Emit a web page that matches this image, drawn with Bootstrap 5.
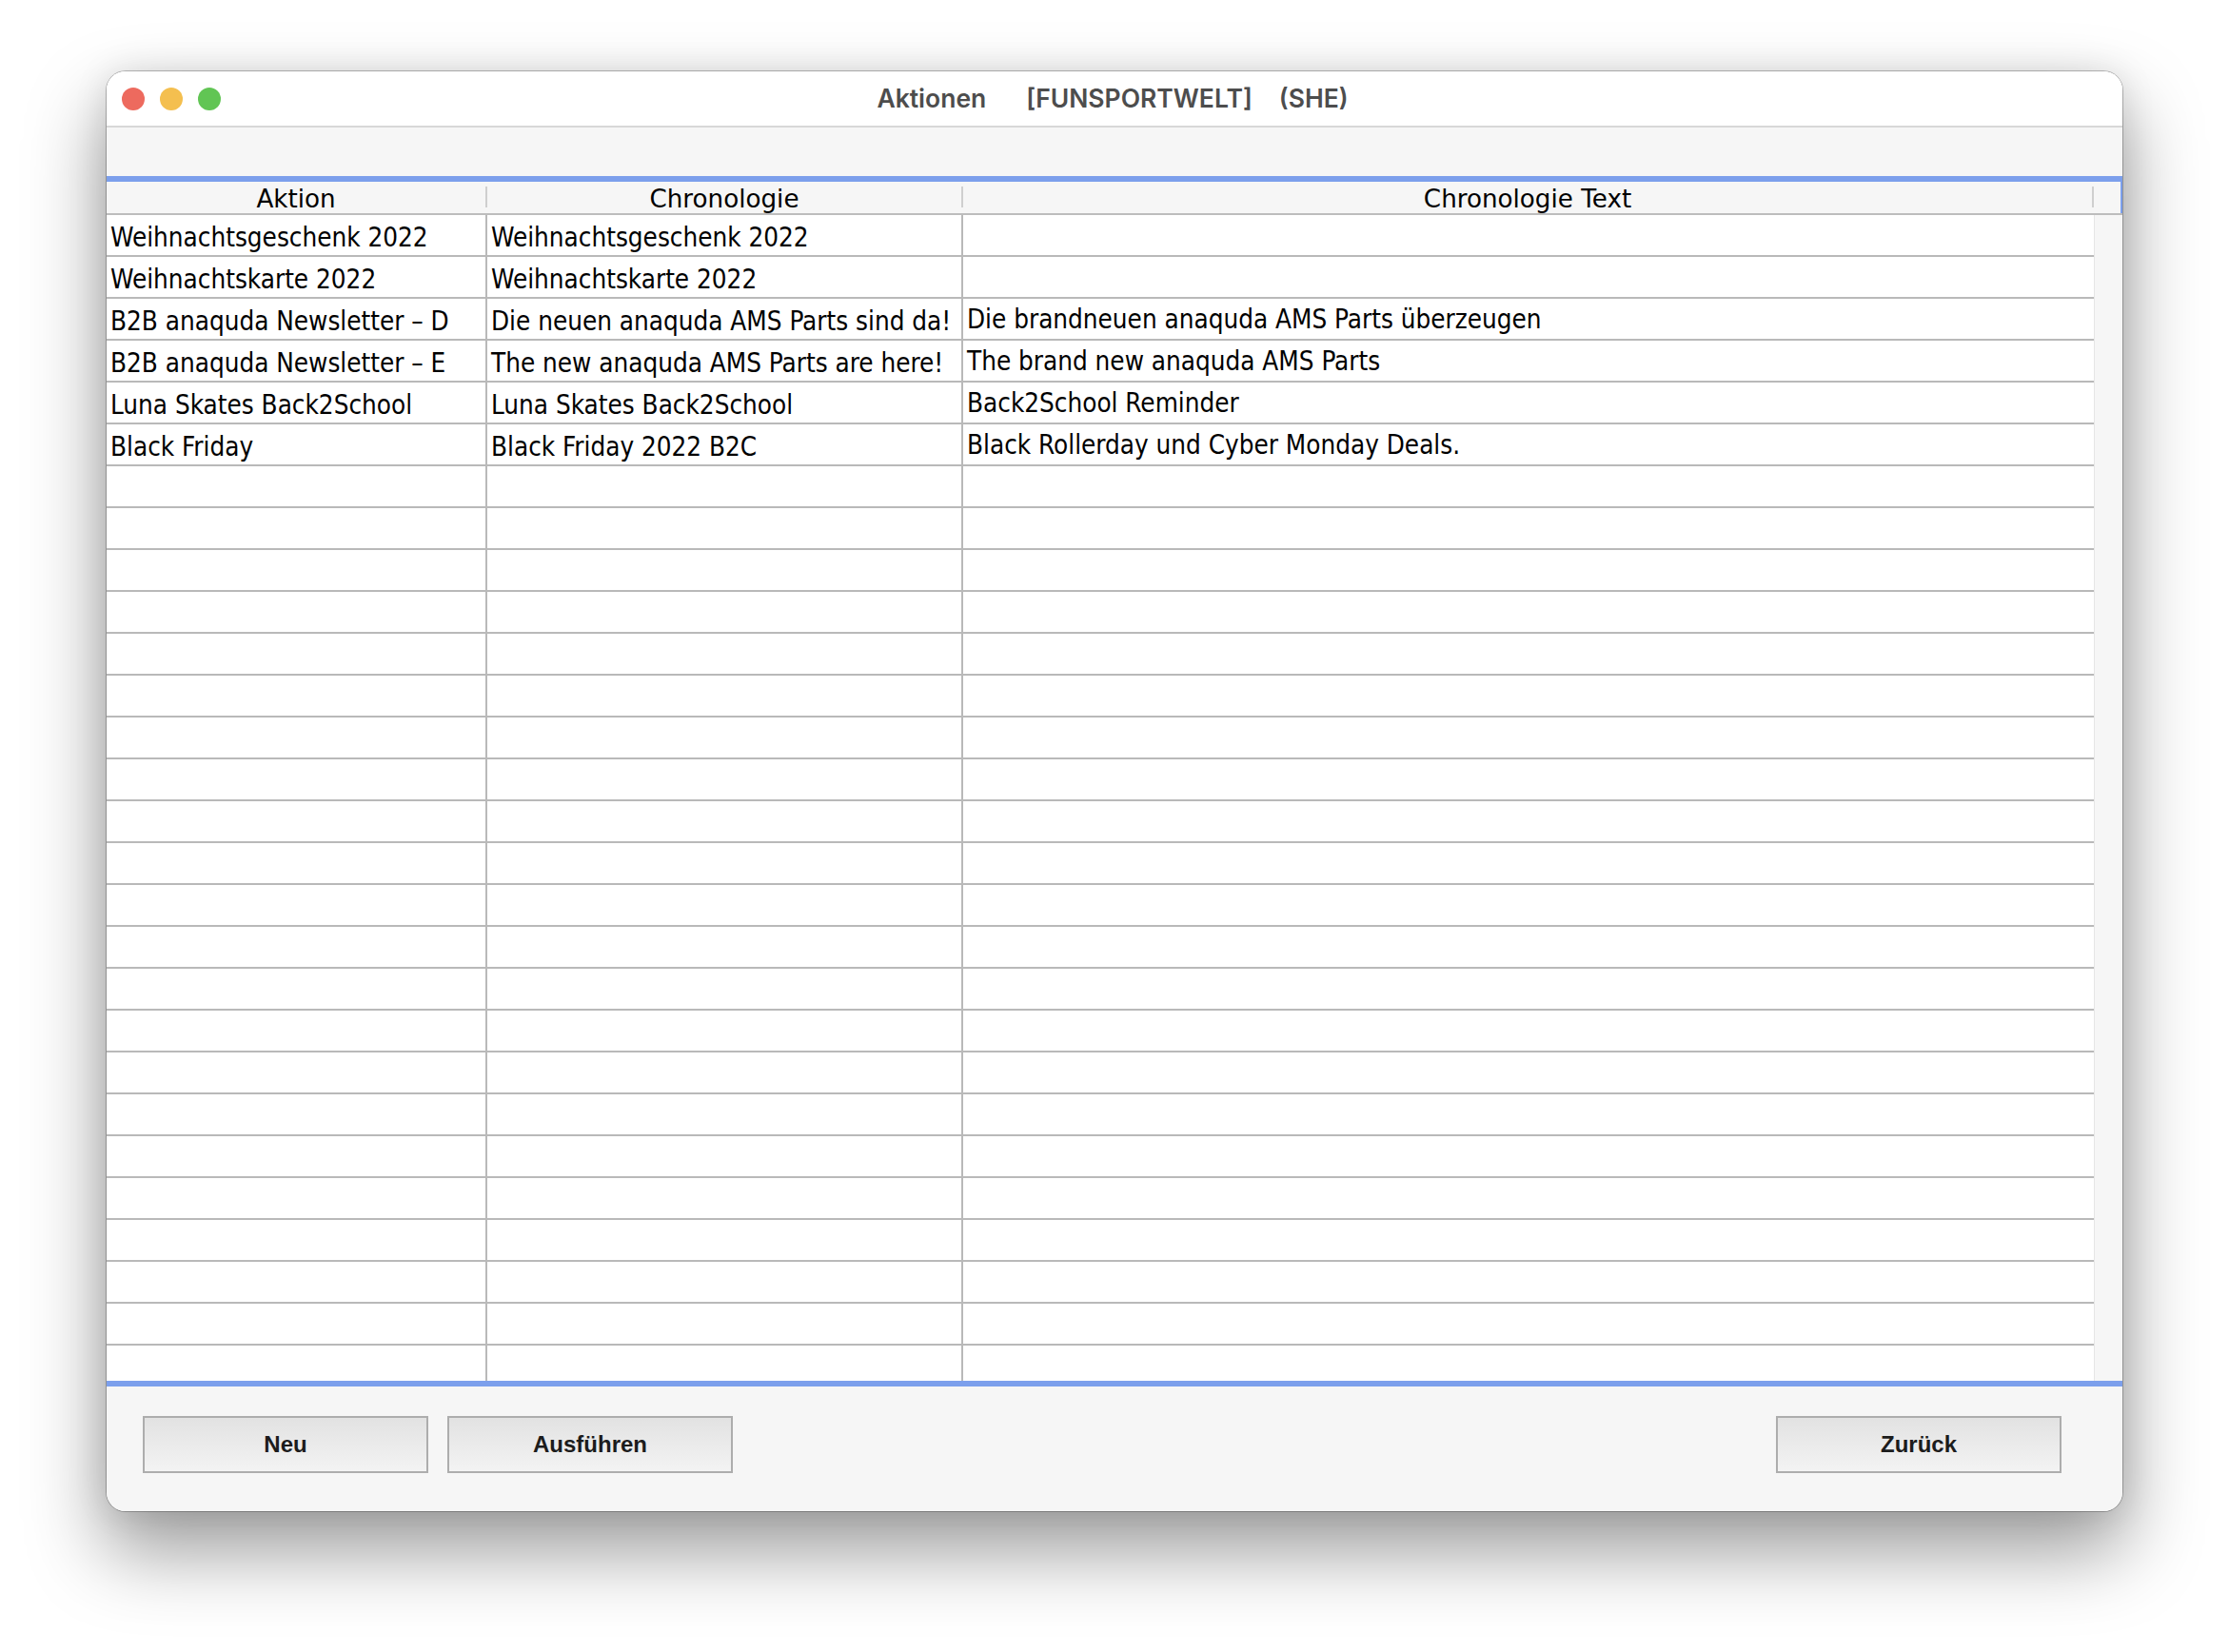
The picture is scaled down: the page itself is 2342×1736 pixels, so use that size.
<!DOCTYPE html>
<html lang="de">
<head>
<meta charset="utf-8">
<title>Aktionen</title>
<link href="https://cdn.jsdelivr.net/npm/bootstrap@5.3.0/dist/css/bootstrap.min.css" rel="stylesheet">
<style>
html,body{height:100%;}
body{background:#fff;overflow:hidden;}
.stage{padding:75px 0 0 112px;}
.appwin{width:2118px;height:1513px;border-radius:20px;background:#f6f6f6;overflow:hidden;}
.winshadow{width:2118px;height:1513px;border-radius:20px;box-shadow:0 0 0 1px rgba(0,0,0,.25),0 40px 80px 4px rgba(0,0,0,.38),0 0 36px rgba(0,0,0,.1);}
.titlebar{height:59px;background:#fff;border-bottom:2px solid #d8d8d8;padding:0 24px 0 16px;}
.dot{width:24px;height:24px;border-radius:50%;}
.dot-r{background:#ed6a5e;}
.dot-y{background:#f4bf4f;}
.dot-g{background:#61c554;}
.lights{gap:16px;}
.wintitle{flex:1;font-family:Inter,"Liberation Sans",sans-serif;font-weight:600;font-size:26.5px;color:#4d4d4d;gap:42px;margin-right:100px;}
.wintitle span+span+span{margin-left:-14px;}
.toolstrip{height:51px;background:#f6f6f6;}
.tablepane{height:1272px;border-top:6px solid #7c9fec;border-bottom:6px solid #7c9fec;overflow:hidden;background:#fff;}
.tablepane table{table-layout:fixed;width:2118px;margin:0;font-family:"DejaVu Sans Condensed","DejaVu Sans",sans-serif;font-stretch:condensed;font-size:27.6px;color:#000;border-collapse:separate;border-spacing:0;}
.tablepane th{height:35px;padding:0;background:#f6f6f6;border-bottom:2px solid #bdbdbd;font-family:"DejaVu Sans",sans-serif;font-stretch:normal;font-size:26.2px;font-weight:400;text-align:center;vertical-align:top;}
.hcell{height:22px;margin-top:5px;line-height:26px;border-right:2px solid #cfcfcf;}
.hcell-end{height:33px;margin-top:0;border-right:2px solid #7c9fec;}
.tablepane td{height:44px;padding:5px 0 0 4px;background:#fff;border-right:2px solid #b9b9b9;border-bottom:2px solid #b9b9b9;line-height:37px;white-space:nowrap;overflow:hidden;vertical-align:middle;}
.tablepane td.c3{border-right:0;padding-top:3px;padding-bottom:2px;}
.tablepane td.filler{background:#f6f6f6;border:0;border-left:1px solid #e6e6e6;padding:0;}
.bottombar{height:102px;background:#f6f6f6;padding:31px 64px 40px 38px;}
.gapbtn{gap:20px;}
.btn.appbtn{width:300px;height:60px;padding:0;border:2px solid #adadad;border-radius:0;background:linear-gradient(#e2e2e2,#f3f3f3);font-family:"Liberation Sans",sans-serif;font-weight:700;font-size:24px;color:#1c1c1c;}
</style>
</head>
<body>
<div class="stage">
<div class="winshadow">
<div class="appwin d-flex flex-column">
  <div class="titlebar d-flex align-items-center">
    <div class="lights d-flex">
      <div class="dot dot-r"></div><div class="dot dot-y"></div><div class="dot dot-g"></div>
    </div>
    <div class="wintitle d-flex justify-content-center">
      <span>Aktionen</span><span>[FUNSPORTWELT]</span><span>(SHE)</span>
    </div>
  </div>
  <div class="toolstrip"></div>
  <div class="tablepane">
    <table class="table table-borderless">
      <colgroup><col style="width:400px"><col style="width:500px"><col style="width:1188px"><col style="width:30px"></colgroup>
      <thead>
        <tr><th><div class="hcell">Aktion</div></th><th><div class="hcell">Chronologie</div></th><th><div class="hcell">Chronologie Text</div></th><th><div class="hcell hcell-end"></div></th></tr>
      </thead>
      <tbody>
        <tr><td>Weihnachtsgeschenk 2022</td><td>Weihnachtsgeschenk 2022</td><td class="c3"></td><td class="filler"></td></tr>
        <tr><td>Weihnachtskarte 2022</td><td>Weihnachtskarte 2022</td><td class="c3"></td><td class="filler"></td></tr>
        <tr><td>B2B anaquda Newsletter – D</td><td>Die neuen anaquda AMS Parts sind da!</td><td class="c3">Die brandneuen anaquda AMS Parts überzeugen</td><td class="filler"></td></tr>
        <tr><td>B2B anaquda Newsletter – E</td><td>The new anaquda AMS Parts are here!</td><td class="c3">The brand new anaquda AMS Parts</td><td class="filler"></td></tr>
        <tr><td>Luna Skates Back2School</td><td>Luna Skates Back2School</td><td class="c3">Back2School Reminder</td><td class="filler"></td></tr>
        <tr><td>Black Friday</td><td>Black Friday 2022 B2C</td><td class="c3">Black Rollerday und Cyber Monday Deals.</td><td class="filler"></td></tr>
        <tr><td></td><td></td><td class="c3"></td><td class="filler"></td></tr>
        <tr><td></td><td></td><td class="c3"></td><td class="filler"></td></tr>
        <tr><td></td><td></td><td class="c3"></td><td class="filler"></td></tr>
        <tr><td></td><td></td><td class="c3"></td><td class="filler"></td></tr>
        <tr><td></td><td></td><td class="c3"></td><td class="filler"></td></tr>
        <tr><td></td><td></td><td class="c3"></td><td class="filler"></td></tr>
        <tr><td></td><td></td><td class="c3"></td><td class="filler"></td></tr>
        <tr><td></td><td></td><td class="c3"></td><td class="filler"></td></tr>
        <tr><td></td><td></td><td class="c3"></td><td class="filler"></td></tr>
        <tr><td></td><td></td><td class="c3"></td><td class="filler"></td></tr>
        <tr><td></td><td></td><td class="c3"></td><td class="filler"></td></tr>
        <tr><td></td><td></td><td class="c3"></td><td class="filler"></td></tr>
        <tr><td></td><td></td><td class="c3"></td><td class="filler"></td></tr>
        <tr><td></td><td></td><td class="c3"></td><td class="filler"></td></tr>
        <tr><td></td><td></td><td class="c3"></td><td class="filler"></td></tr>
        <tr><td></td><td></td><td class="c3"></td><td class="filler"></td></tr>
        <tr><td></td><td></td><td class="c3"></td><td class="filler"></td></tr>
        <tr><td></td><td></td><td class="c3"></td><td class="filler"></td></tr>
        <tr><td></td><td></td><td class="c3"></td><td class="filler"></td></tr>
        <tr><td></td><td></td><td class="c3"></td><td class="filler"></td></tr>
        <tr><td></td><td></td><td class="c3"></td><td class="filler"></td></tr>
        <tr><td></td><td></td><td class="c3"></td><td class="filler"></td></tr>
      </tbody>
    </table>
  </div>
  <div class="bottombar d-flex justify-content-between">
    <div class="d-flex gapbtn">
      <button type="button" class="btn appbtn">Neu</button>
      <button type="button" class="btn appbtn">Ausführen</button>
    </div>
    <button type="button" class="btn appbtn">Zurück</button>
  </div>
</div>
</div>
</div>
<script src="https://cdn.jsdelivr.net/npm/bootstrap@5.3.0/dist/js/bootstrap.bundle.min.js"></script>
</body>
</html>
